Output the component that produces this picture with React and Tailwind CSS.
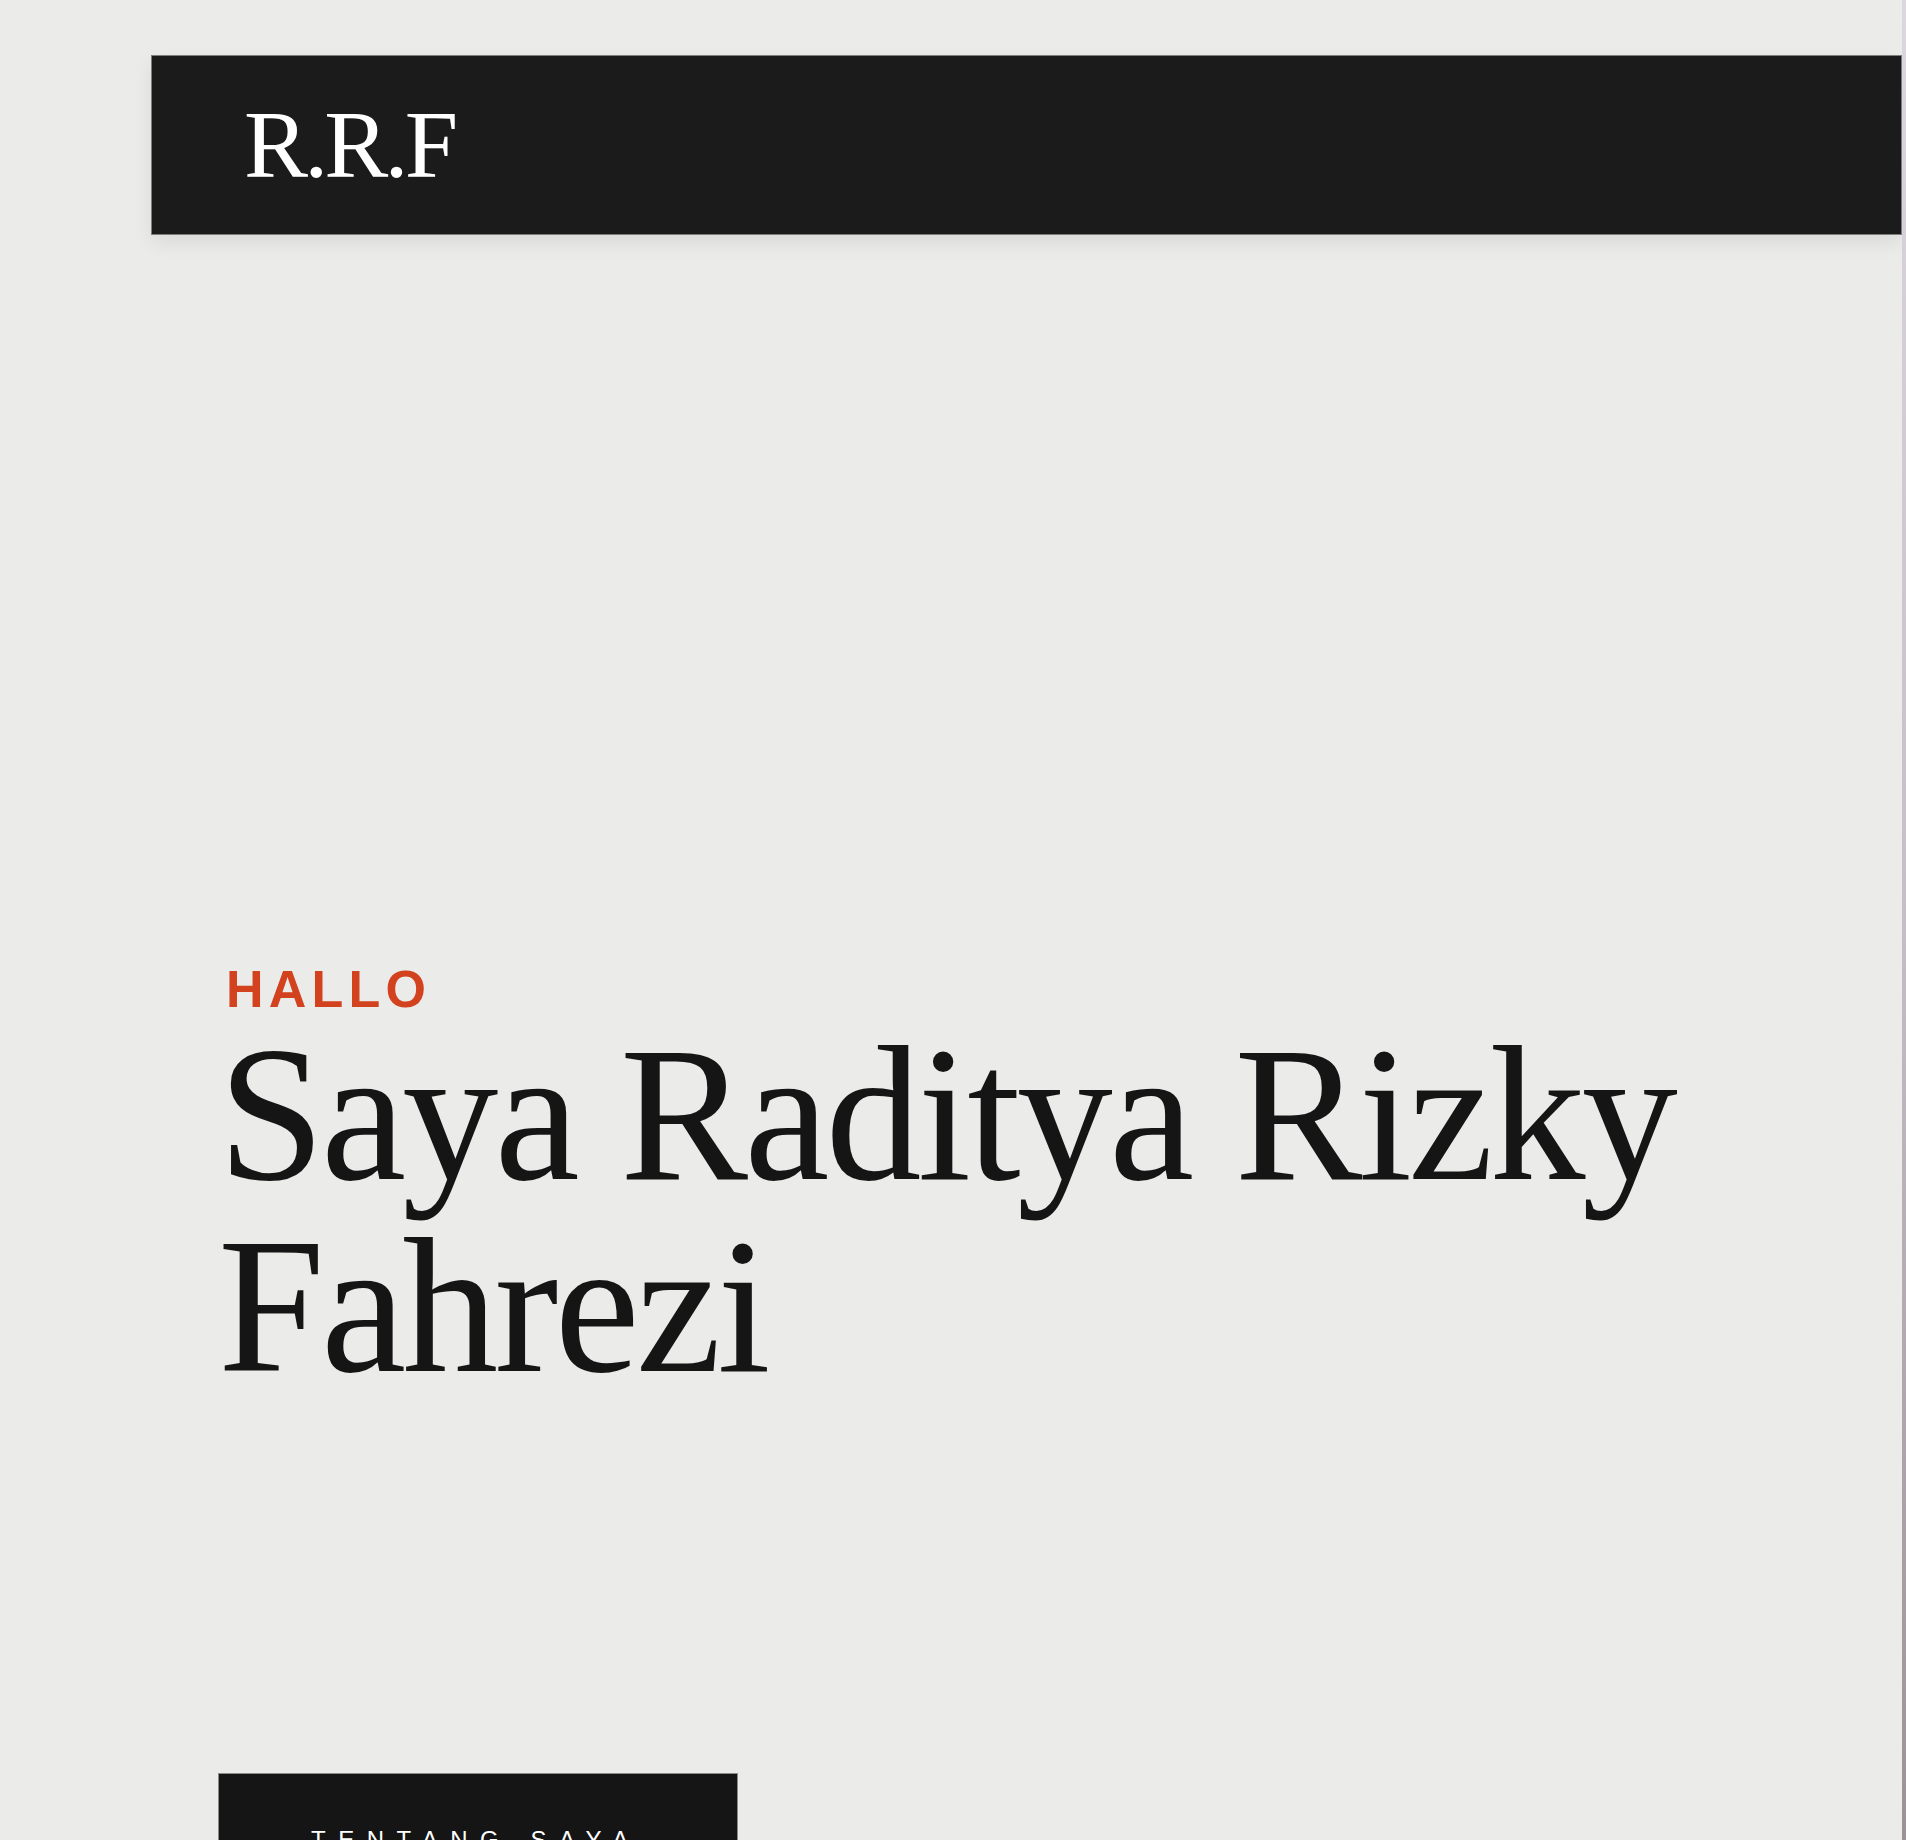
export default function App() {
  return (
    <div className="flex h-[1840px] w-full overflow-hidden bg-[#ebecea]">
      <div className="flex-1 flex flex-col">
        <header className="shrink-0 mt-[55px] ml-[151px] h-[180px] flex items-center bg-[#1b1b1b] border border-[#7d7d7d] shadow-[0_8px_18px_rgba(0,0,0,0.07)] pl-[92px]">
          <span className="text-white text-[96px] leading-none tracking-[-0.04em] font-['Liberation_Serif',serif]">
            R.R.F
          </span>
        </header>

        <section className="shrink-0 mt-[728px] ml-[218px] flex flex-col">
          <p className="ml-[8px] text-[52px] leading-none font-bold tracking-[0.1em] text-[#d2421e] font-['Liberation_Sans',sans-serif]">
            HALLO
          </p>
          <h1 className="mt-[4px] text-[192px] leading-[192px] tracking-[-0.02em] text-[#151515] font-['Liberation_Serif',serif] font-normal">
            Saya Raditya Rizky
            <br />
            Fahrezi
          </h1>
          <div className="mt-[370px]">
            <button className="bg-[#151515] border border-[#8a8a8a] pl-[92px] pr-[96px] py-[54px] text-white text-2xl leading-none tracking-[0.52em] font-['Liberation_Sans',sans-serif]">
              TENTANG SAYA
            </button>
          </div>
        </section>
      </div>
      <div className="shrink-0 w-[4px] h-full bg-linear-to-b from-[#dcd6de] via-[#c6bec6] to-[#9a9296]" />
    </div>
  );
}
